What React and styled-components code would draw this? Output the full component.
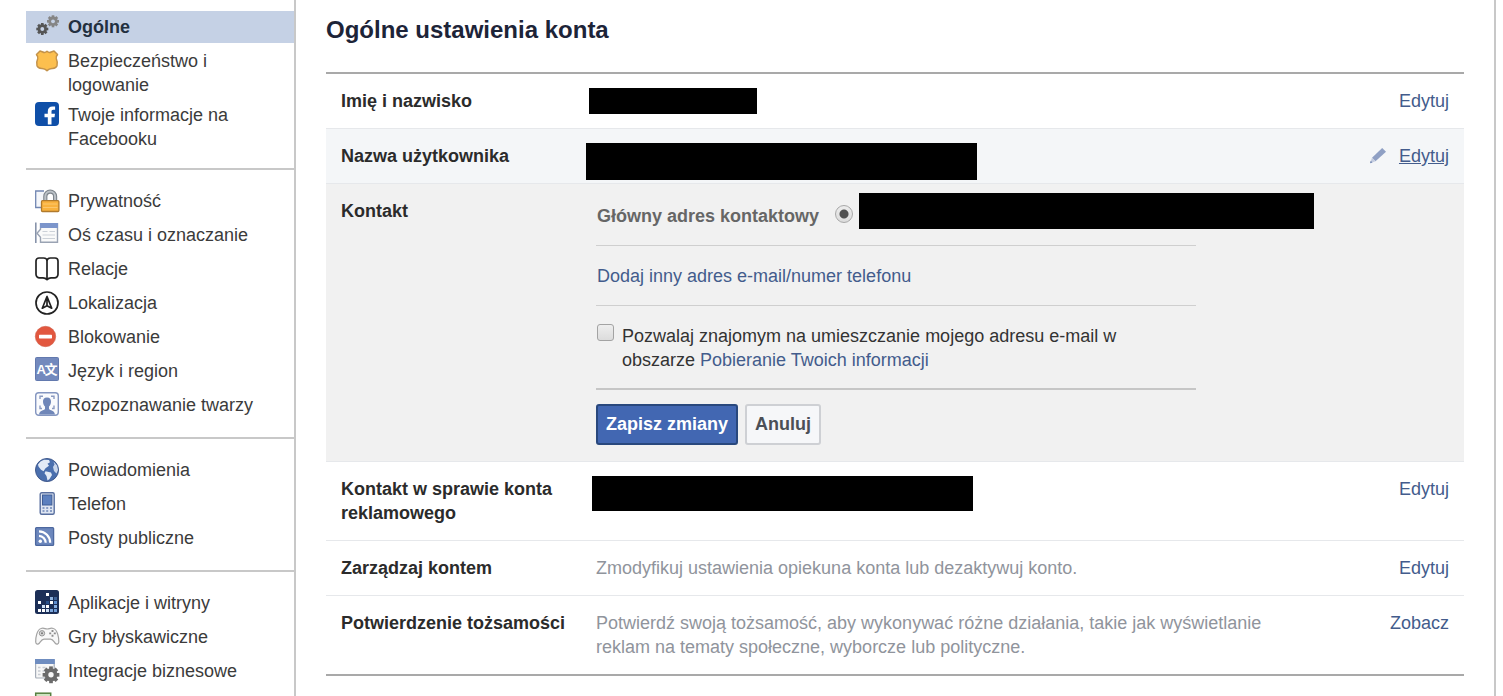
import styled, { createGlobalStyle, css } from 'styled-components'
import { useState } from 'react'

const GlobalStyle = createGlobalStyle`
    *{
        box-sizing: border-box;
    }
    body{
        margin: 0;
        background: white;
        color: #333;
        font-family: "Liberation Sans", Arial, sans-serif;
        font-size: 18px;
        line-height: 24px;
    }
`

const Page = styled.div`
    display: flex;
    height: 100vh;
    overflow: hidden;
    padding: 0 7px 0 26px;
`

/* ---------- sidebar ---------- */

const Sidebar = styled.nav`
    flex: 0 0 268px;
    padding-top: 11px;
`
const Group = styled.ul`
    list-style: none;
    margin: 0;
    padding: 0 0 15px;
    & + &{
        border-top: 2px solid #c8c8c8;
        padding-top: 14px;
    }
`
const NavLink = styled.a`
    display: flex;
    gap: 9px;
    padding: 5px 30px 5px 9px;
    color: #3b3b3b;
    text-decoration: none;
    ${p => p.$tall && css`
        padding-top: 4px;
        padding-bottom: 2px;
    `}
    ${p => p.$active && css`
        padding-top: 4px;
        padding-bottom: 4px;
        margin-bottom: 2px;
        background: #c5d1e5;
        color: #23303f;
        font-weight: bold;
    `}
`
const Icon = styled.svg`
    flex: none;
    width: 24px;
    height: 24px;
    overflow: visible;
`

/* ---------- main column ---------- */

const Main = styled.main`
    flex: 1;
    min-width: 0;
    padding: 14px 30px 0;
    border: 2px solid #c8c8c8;
    border-width: 0 2px;
`
const Title = styled.h1`
    margin: 0 0 26px;
    color: #1d2438;
    font-size: 24px;
    line-height: 32px;
`
const Settings = styled.div`
    border-top: 2px solid #a9a9a9;
    border-bottom: 2px solid #a9a9a9;
`
const backgrounds = { hover: '#f4f6f8', open: '#f1f1f1' }
const Row = styled.section`
    display: grid;
    grid-template-columns: 240px 1fr auto;
    column-gap: 15px;
    padding: 15px;
    background: ${p => backgrounds[p.$state] ?? 'white'};
    &:not(:last-child){
        border-bottom: 1px solid #e6e8eb;
    }
`
const Label = styled.h2`
    margin: 0;
    font-size: 18px;
    line-height: 24px;
    color: #2b2b2b;
`
const Value = styled.div`
    position: relative;
    min-width: 0;
`
const Hint = styled.p`
    margin: 0;
    max-width: 700px;
    color: #90949c;
`
/* black bar that lies over a private value */
const Cover = styled.span`
    position: absolute;
    left: ${p => p.$x}px;
    top: ${p => p.$y}px;
    width: ${p => p.$w}px;
    height: ${p => p.$h}px;
    background: black;
`
const Action = styled.a`
    display: flex;
    align-items: center;
    align-self: start;
    gap: 13px;
    color: #435c8c;
    text-decoration: none;
    & span{
        text-decoration: ${p => p.$underlined ? 'underline' : 'none'};
    }
`
const TextLink = styled.a`
    color: #435c8c;
    text-decoration: none;
`

/* ---------- contact form ---------- */

const Form = styled.form`
    max-width: 600px;
    padding-top: 5px;
`
const Field = styled.div`
    display: flex;
    align-items: flex-start;
    padding: 0 16px 17px 1px;
    border-bottom: 1px solid #cfcfcf;
    & + &{
        padding-top: 18px;
    }
    &:nth-last-child(2){
        padding-bottom: 16px;
        border-bottom: 2px solid #c6c6c6;
    }
`
const FieldName = styled.label`
    margin-right: 16px;
    color: #666;
    font-weight: bold;
`
const Radio = styled.input`
    appearance: none;
    width: 18px;
    height: 18px;
    margin: 1px 0 0;
    border: 1px solid #a8a8a8;
    border-radius: 50%;
    background: linear-gradient(#ececec, #dcdcdc);
    &:checked{
        background: radial-gradient(circle, #505050 4px, transparent 5px), linear-gradient(#ececec, #dcdcdc);
    }
`
const Checkbox = styled.input`
    appearance: none;
    flex: none;
    width: 17px;
    height: 17px;
    margin: 0 8px 0 0;
    border: 1px solid #a3a3a3;
    border-radius: 3px;
    background: linear-gradient(#eee, #dcdcdc);
    &:checked{
        background: #505050;
    }
`
const Buttons = styled.div`
    display: flex;
    gap: 7px;
    padding: 14px 0 1px;
`
const Button = styled.button`
    height: 41px;
    padding: 0 8px;
    border: 2px solid ${p => p.$primary ? '#29487d' : '#ced0d4'};
    border-radius: 3px;
    background: ${p => p.$primary ? '#4267b2' : '#f6f7f9'};
    color: ${p => p.$primary ? 'white' : '#4b4f56'};
    font: bold 18px "Liberation Sans", Arial, sans-serif;
    cursor: pointer;
`

/* ---------- icons ---------- */

const Gear = ({ x, y, r, color, hole }) => (
    <g transform={`translate(${x} ${y})`}>
        {[0, 45, 90, 135].map(a => (
            <rect key={a} x={-r * 0.22} y={-r} width={r * 0.44} height={r * 2} fill={color} transform={`rotate(${a})`} />
        ))}
        <circle r={r * 0.78} fill={color} />
        <circle r={r * 0.32} fill={hole} />
    </g>
)

const appDots = [
    [11, 3, '#fff'], [3, 11, '#fff'], [15, 7, '#8fb4e0'], [19, 7, '#3e6398'], [11, 11, '#29518c'],
    [15, 11, '#fff'], [7, 15, '#cfe2f7'], [11, 15, '#fff'], [19, 11, '#5f8fd0'], [19, 15, '#86b0e4'],
    [3, 19, '#fff'], [7, 19, '#fff'], [11, 19, '#cfe2f7'], [15, 19, '#7aa5dc'], [19, 19, '#6e9bd6'],
]

const icons = {
    gears: <>
        <Gear x={18} y={6.3} r={6} color="#858585" hole="#c5d1e5" />
        <Gear x={7.3} y={14} r={6} color="#555" hole="#c5d1e5" />
    </>,
    shield: <path
        d="M5 2L7.800 3q2.200 1.200 4.200-.7q2 1.900 4.200.7L19 2L22.500 5.600q-2 2-1.200 4.200q1.700 3.700.7 7q-1 2.800-5 2.600q-3 .2-5 2.200q-2-2-5-2.200q-4 .2-5-2.600q-1-3.300.7-7q.8-2.200-1.200-4.200z"
        fill="#fcbf4e" stroke="#c3924a" strokeWidth="1.500" strokeLinejoin="round"
    />,
    facebook: <>
        <rect y="-1" width="24" height="24" rx="4" fill="#0f4fa8" />
        <path d="M12.800 21.500v-7.300H9.500v-3.400h3.300V8.200c0-3.100 1.900-4.700 4.700-4.700h2.600v3.300h-1.700c-1.500 0-1.900.8-1.900 1.800v2.200h3.500l-.5 3.400h-3v7.300z" fill="#fff" />
    </>,
    privacy: <>
        <path d="M8 18.500H.700V2H9" fill="#f4f6fa" stroke="#7186b2" strokeWidth="1.300" />
        <path d="M10.300 12V7.500a4.900 4.900 0 0 1 9.800 0V12" fill="none" stroke="#7e858c" strokeWidth="4.200" />
        <path d="M10.300 12V7.500a4.900 4.900 0 0 1 9.800 0V12" fill="none" stroke="#bcc2c8" strokeWidth="2" />
        <rect x="6.500" y="11.700" width="17.400" height="10.800" rx="1" fill="#f9b23e" stroke="#b07a2d" strokeWidth="1.300" />
        <path d="M8 15h14.500M8 18.500h14.500" stroke="#fcc76c" />
    </>,
    timeline: <>
        <path d="M.800-.500V20" stroke="#8793aa" strokeWidth="1.600" />
        <path d="M5.500.700h17v18.600h-17v-5L2 10.200l3.500-4z" fill="#fafafa" stroke="#9aa3b3" strokeWidth="1.400" />
        <rect x="5" y="0" width="18" height="5" fill="#7c95cb" />
        <path d="M7.500 8.500h5M14.500 8.500h5.500M7.500 12h12.500M7.500 15.500h12.500" stroke="#ccd1d8" />
    </>,
    book: <path
        d="M12 22.700c-1.500-1.900-2.500-1.900-4-1.900H4.500A3.500 3.500 0 0 1 1 17.300V4A3 3 0 0 1 4 1h4.500C10.500 1 12 2 12 4.200C12 2 13.500 1 15.500 1H20a3 3 0 0 1 3 3v13.300a3.500 3.500 0 0 1-3.500 3.500H16c-1.500 0-2.500 0-4 1.900zM12 4v18.500"
        fill="none" stroke="#222" strokeWidth="1.700" strokeLinejoin="round"
    />,
    location: <>
        <circle cx="12" cy="12" r="11" fill="none" stroke="#222" strokeWidth="1.700" />
        <path d="M12 5.500L7.300 17.200L12 14.800l4.700 2.400zM12 5.500v9.300" fill="none" stroke="#222" strokeWidth="1.700" strokeLinejoin="round" />
    </>,
    block: <>
        <circle cx="10.500" cy="11.500" r="10.200" fill="#e2573f" stroke="#cf5f4c" strokeWidth=".6" />
        <rect x="4" y="9.800" width="13" height="3.600" rx=".6" fill="#fff" />
    </>,
    language: <>
        <rect x=".5" y="-1.500" width="23" height="23" rx="1" fill="#7389bd" stroke="#6279ae" />
        <text x="1.500" y="15" fill="#fff" fontSize="13" fontWeight="bold">A</text>
        <text x="9.500" y="15" fill="#fff" fontSize="13" fontWeight="bold" fontFamily="'Noto Sans CJK SC', sans-serif">文</text>
    </>,
    face: <>
        <rect x=".7" y="-.3" width="22.600" height="22.600" rx="3" fill="#fafbfd" stroke="#8496c0" strokeWidth="1.400" />
        <path d="M5 6V3.200h3M16 3.200h3V6M5 12.500v3h2M19 12.500v3h-2" fill="none" stroke="#8b9bc1" strokeWidth="1.400" />
        <path d="M12 4.500c3 0 4.200 1.800 4 4.600c-.2 2.400-1 3.600-2 4.500v2.400c1 1.500 5.500 1.200 6 5.600H4c.5-4.400 5-4.100 6-5.600v-2.400c-1-.9-1.800-2.100-2-4.500c-.2-2.800 1-4.600 4-4.600z" fill="#6f86b8" />
    </>,
    globe: <>
        <circle cx="12" cy="12" r="11.500" fill="#4a6fae" stroke="#40598c" />
        <path d="M5.500 3.500L9 1.800l5 .2l1 2.200l-2.500 1.600l1.500 2l-3.500 2.500l-2 3l-2.500-1.500L3.500 8.500L3 6.500z" fill="#e3ebf6" />
        <path d="M10.500 13.200l5.500 1.300l1 2.500l-2.500 4l-2 1.500l-1-4.500l-2-2.800z" fill="#e3ebf6" />
        <path d="M18.500 3.500l3.500 4l1 4.500l-1.500 3.500l-2.500-2.500l-1-4l1.500-2.500z" fill="#c9d6eb" />
    </>,
    phone: <>
        <rect x="5.200" y=".7" width="14" height="21.600" rx="1.500" fill="#dfe6f2" stroke="#586f9f" strokeWidth="1.400" />
        <rect x="7.500" y="3" width="9.400" height="10" fill="#5c80bf" stroke="#3f5d95" />
        <path d="M7.500 16h2M11.200 16h2M15 16h2M7.500 19h2M11.200 19h2M15 19h2" stroke="#6d86b7" strokeWidth="1.600" />
    </>,
    rss: <>
        <rect x=".6" y="1.600" width="18" height="17.800" rx="1" fill="#6c87bd" stroke="#4d689f" strokeWidth="1.300" />
        <circle cx="5.300" cy="15.200" r="1.700" fill="#fff" />
        <path d="M4 9.800a7 7 0 0 1 6.700 7M4 5.300a11.500 11.500 0 0 1 11.200 11.500" fill="none" stroke="#fff" strokeWidth="2.200" />
    </>,
    apps: <>
        <rect x="0" y="-1" width="24" height="24" rx="2.500" fill="#1c2f57" />
        {appDots.map(([x, y, fill]) => <rect key={`${x}-${y}`} x={x} y={y - 1} width="3" height="3" fill={fill} />)}
    </>,
    gamepad: <>
        <path d="M6 3.500c3-1 4 .5 6.200.5s3.200-1.500 6.200-.5C22.500 4.500 24 13 23.800 17c-.2 2.500-2.300 2.800-3.800 1c-1.500-2-2.500-3.800-4.500-3.800H9c-2 0-3 1.800-4.500 3.800c-1.500 1.800-3.600 1.500-3.800-1C.500 13 1.900 4.500 6 3.500z" fill="#f8f8f8" stroke="#a3a3a3" strokeWidth="1.200" />
        <circle cx="7" cy="8.300" r="2.700" fill="#d5d5d5" stroke="#999" />
        <circle cx="7" cy="8.300" r="1" fill="#777" />
        <path d="M17.500 5v2M17.500 9.800v2M14.200 8.400h2M18.800 8.400h2" stroke="#8d8d8d" strokeWidth="1.900" />
    </>,
    business: <>
        <rect x=".6" y=".6" width="18.600" height="18.400" rx="1" fill="#f7f7f7" stroke="#a6adb8" strokeWidth="1.200" />
        <rect x="0" y="0" width="19.800" height="5" fill="#6f8dc0" />
        <path d="M3 8.500h2.500M7.500 8.500h3M3 12h2.500M7.500 12h3M3 15.500h2.500" stroke="#c8ccd2" strokeWidth="1.400" />
        <Gear x={16} y={15.800} r={8.400} color="#6b6b6b" hole="#f7f7f7" />
    </>,
    payments: <rect x=".7" y=".2" width="15" height="16" fill="#cfe3c2" stroke="#56803f" strokeWidth="1.500" />,
}

const groups = [
    [
        { icon: 'gears', text: 'Ogólne', active: true },
        { icon: 'shield', text: 'Bezpieczeństwo i logowanie', tall: true },
        { icon: 'facebook', text: 'Twoje informacje na Facebooku', tall: true },
    ],
    [
        { icon: 'privacy', text: 'Prywatność' },
        { icon: 'timeline', text: 'Oś czasu i oznaczanie' },
        { icon: 'book', text: 'Relacje' },
        { icon: 'location', text: 'Lokalizacja' },
        { icon: 'block', text: 'Blokowanie' },
        { icon: 'language', text: 'Język i region' },
        { icon: 'face', text: 'Rozpoznawanie twarzy' },
    ],
    [
        { icon: 'globe', text: 'Powiadomienia' },
        { icon: 'phone', text: 'Telefon' },
        { icon: 'rss', text: 'Posty publiczne' },
    ],
    [
        { icon: 'apps', text: 'Aplikacje i witryny' },
        { icon: 'gamepad', text: 'Gry błyskawiczne' },
        { icon: 'business', text: 'Integracje biznesowe' },
        { icon: 'payments' },
    ],
]

const Pencil = () => (
    <svg width="16" height="16" viewBox="0 0 16 16" aria-hidden="true">
        <path d="M12.200 0L16 3.700L5.500 13.300L2 9.700z" fill="#8fa0c4" />
        <path d="M2 9.700L5.500 13.300L0 15.200z" fill="#c3cce0" />
        <path d="M.700 12.800L2.500 14.500L0 15.200z" fill="#7488b3" />
    </svg>
)

function SettingRow({ label, state, action, editing, children }) {
    return (
        <Row $state={state}>
            <Label>{label}</Label>
            <Value>{children}</Value>
            {action && (
                <Action href="#" $underlined={editing}>
                    {editing && <Pencil />}
                    <span>{action}</span>
                </Action>
            )}
        </Row>
    )
}

function ContactForm() {
    const [allowed, setAllowed] = useState(false)
    return (
        <Form onSubmit={e => e.preventDefault()}>
            <Field>
                <FieldName htmlFor="primary">Główny adres kontaktowy</FieldName>
                <Radio type="radio" id="primary" name="primary" defaultChecked />
                <Cover $x={263} $y={-6} $w={455} $h={36} />
            </Field>
            <Field>
                <TextLink href="#">Dodaj inny adres e-mail/numer telefonu</TextLink>
            </Field>
            <Field>
                <Checkbox type="checkbox" id="allow" checked={allowed} onChange={() => setAllowed(!allowed)} />
                <label htmlFor="allow">
                    Pozwalaj znajomym na umieszczanie mojego adresu e-mail w obszarze{' '}
                    <TextLink href="#">Pobieranie Twoich informacji</TextLink>
                </label>
            </Field>
            <Buttons>
                <Button type="submit" $primary>Zapisz zmiany</Button>
                <Button type="button">Anuluj</Button>
            </Buttons>
        </Form>
    )
}

export default function App() {
    return (
        <Page>
            <GlobalStyle />
            <Sidebar>
                {groups.map((group, i) => (
                    <Group key={i}>
                        {group.map(item => (
                            <li key={item.icon}>
                                <NavLink href="#" $active={item.active} $tall={item.tall}>
                                    <Icon viewBox="0 0 24 24" aria-hidden="true">{icons[item.icon]}</Icon>
                                    {item.text && <span>{item.text}</span>}
                                </NavLink>
                            </li>
                        ))}
                    </Group>
                ))}
            </Sidebar>
            <Main>
                <Title>Ogólne ustawienia konta</Title>
                <Settings>
                    <SettingRow label="Imię i nazwisko" action="Edytuj">
                        <Cover $x={-7} $y={-1} $w={168} $h={26} />
                    </SettingRow>
                    <SettingRow label="Nazwa użytkownika" state="hover" action="Edytuj" editing>
                        <Cover $x={-10} $y={-1} $w={391} $h={37} />
                    </SettingRow>
                    <SettingRow label="Kontakt" state="open">
                        <ContactForm />
                    </SettingRow>
                    <SettingRow label="Kontakt w sprawie konta reklamowego" action="Edytuj">
                        <Cover $x={-4} $y={-1} $w={381} $h={35} />
                    </SettingRow>
                    <SettingRow label="Zarządzaj kontem" action="Edytuj">
                        <Hint>Zmodyfikuj ustawienia opiekuna konta lub dezaktywuj konto.</Hint>
                    </SettingRow>
                    <SettingRow label="Potwierdzenie tożsamości" action="Zobacz">
                        <Hint>
                            Potwierdź swoją tożsamość, aby wykonywać różne działania, takie jak wyświetlanie
                            reklam na tematy społeczne, wyborcze lub polityczne.
                        </Hint>
                    </SettingRow>
                </Settings>
            </Main>
        </Page>
    )
}
